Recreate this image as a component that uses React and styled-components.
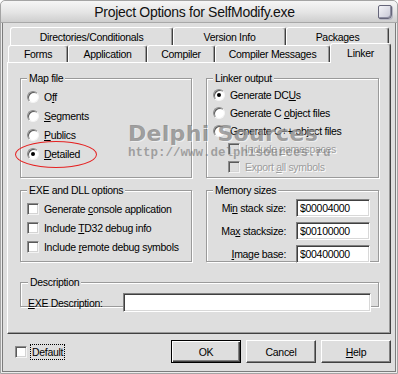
import React from "react"
import styled, { createGlobalStyle } from "styled-components"

const GlobalStyle = createGlobalStyle`
  body {
    margin: 0;
    background: #ffffff;
  }
`

const backTabs = [
  { label: "Directories/Conditionals", w: 163 },
  { label: "Version Info", w: 113 },
  { label: "Packages", w: 103 },
]

const frontTabs = [
  { label: "Forms", w: 60 },
  { label: "Application", w: 79 },
  { label: "Compiler", w: 68 },
  { label: "Compiler Messages", w: 115 },
  { label: "Linker", w: 61, active: true },
]

const ProjectOptions = () => {
  return (
    <Window>
      <TitleBar>
        <Title>Project Options for SelfModify.exe</Title>
        <CloseBox />
      </TitleBar>
      <Body>
        <TabRow $indent={3} $height={18}>
          {backTabs.map((t) => (
            <Tab key={t.label} $w={t.w}>
              {t.label}
            </Tab>
          ))}
        </TabRow>
        <TabRow $indent={1} $height={17}>
          {frontTabs.map((t) => (
            <Tab key={t.label} $w={t.w} $active={t.active}>
              {t.label}
            </Tab>
          ))}
        </TabRow>
        <Panel>
          <GroupBox $pt={2}>
            <Legend>Map file</Legend>
            <OptionRow $h={19}>
              <Radio />
              <span>O<u>f</u>f</span>
            </OptionRow>
            <OptionRow $h={19}>
              <Radio />
              <span><u>S</u>egments</span>
            </OptionRow>
            <OptionRow $h={19}>
              <Radio />
              <span><u>P</u>ublics</span>
            </OptionRow>
            <OptionRow $h={19}>
              <Radio $checked />
              <span><u>D</u>etailed</span>
            </OptionRow>
          </GroupBox>

          <GroupBox $pt={1}>
            <Legend>Linker output</Legend>
            <OptionRow $h={18}>
              <Radio $checked />
              <span>Generate DC<u>U</u>s</span>
            </OptionRow>
            <OptionRow $h={18}>
              <Radio />
              <span>Generate C <u>o</u>bject files</span>
            </OptionRow>
            <OptionRow $h={18}>
              <Radio />
              <span>Generate C++ object files</span>
            </OptionRow>
            <OptionRow $h={18} $indent={15} $disabled>
              <Check $disabled />
              <span>Include <u>n</u>amespaces</span>
            </OptionRow>
            <OptionRow $h={18} $indent={15} $disabled>
              <Check $disabled />
              <span>Export <u>a</u>ll symbols</span>
            </OptionRow>
          </GroupBox>

          <GroupBox $pt={2}>
            <Legend>EXE and DLL options</Legend>
            <OptionRow $h={19}>
              <Check />
              <span>Generate <u>c</u>onsole application</span>
            </OptionRow>
            <OptionRow $h={19}>
              <Check />
              <span>Include <u>T</u>D32 debug info</span>
            </OptionRow>
            <OptionRow $h={19}>
              <Check />
              <span>Include <u>r</u>emote debug symbols</span>
            </OptionRow>
          </GroupBox>

          <GroupBox $pt={2} $pr={8}>
            <Legend>Memory sizes</Legend>
            <SizeGrid>
              <SizeLabel>Mi<u>n</u> stack size:</SizeLabel>
              <Field $h={18} defaultValue="$00004000" readOnly />
              <SizeLabel>Ma<u>x</u> stacksize:</SizeLabel>
              <Field $h={18} defaultValue="$00100000" readOnly />
              <SizeLabel><u>I</u>mage base:</SizeLabel>
              <Field $h={18} defaultValue="$00400000" readOnly />
            </SizeGrid>
          </GroupBox>

          <GroupBox $pt={4} $pr={7} $wide>
            <Legend>Description</Legend>
            <DescRow>
              <DescLabel><u>E</u>XE Description:</DescLabel>
              <Field $h={19} $grow defaultValue="" readOnly />
            </DescRow>
          </GroupBox>
        </Panel>

        <Footer>
          <Check />
          <FocusLabel>Default</FocusLabel>
          <Buttons>
            <Button $default>OK</Button>
            <Button>Cancel</Button>
            <Button><u>H</u>elp</Button>
          </Buttons>
        </Footer>
      </Body>

      <Watermark>
        <MarkTitle>Delphi Sources</MarkTitle>
        <MarkUrl>http://www.delphisources.ru</MarkUrl>
      </Watermark>
      <Ellipse />
    </Window>
  )
}

const App = () => (
  <>
    <GlobalStyle />
    <ProjectOptions />
  </>
)

export default App

const Window = styled.div`
  position: relative;
  width: 398px;
  height: 374px;
  box-sizing: border-box;
  display: flex;
  flex-direction: column;
  background: #dedede;
  border: 1px solid #a4a4a4;
  border-radius: 5px 5px 0 0;
  box-shadow: inset 0 0 0 1px #ececec, inset 0 0 0 2px #7c7c7c;
  font-family: "Liberation Sans", Arial, sans-serif;
  font-size: 10.5px;
  letter-spacing: -0.3px;
  color: #000;
  overflow: hidden;

  u {
    text-decoration: underline;
    text-underline-offset: 1px;
  }
`

const TitleBar = styled.div`
  height: 22px;
  box-sizing: border-box;
  display: flex;
  align-items: center;
  padding: 0 5px 0 10px;
  background: linear-gradient(#f6f6f6, #e4e4e4 55%, #cecece);
  border-bottom: 1px solid #a8a8a8;
  border-radius: 4px 4px 0 0;
`

const Title = styled.div`
  flex: 1;
  text-align: center;
  font-size: 14px;
  letter-spacing: -0.3px;
  color: #111;
`

const CloseBox = styled.div`
  width: 14px;
  height: 14px;
  box-sizing: border-box;
  border: 1px solid #66667a;
  border-radius: 2px 2px 4px 2px;
  background: linear-gradient(135deg, #f4f4f8, #c6c6d4);
  box-shadow: inset -1px -1px 0 #8e8ea2, 1px 1px 0 #b8b8c4;
`

const Body = styled.div`
  flex: 1;
  display: flex;
  flex-direction: column;
  padding: 4px 6px 0 6px;
`

const TabRow = styled.div`
  display: flex;
  align-items: flex-end;
  height: ${(p) => p.$height}px;
  padding-left: ${(p) => p.$indent}px;
`

const Tab = styled.div`
  position: relative;
  z-index: ${(p) => (p.$active ? 2 : 0)};
  width: ${(p) => p.$w}px;
  height: ${(p) => (p.$active ? "calc(100% + 3px)" : "100%")};
  margin-top: ${(p) => (p.$active ? "-2px" : "0")};
  margin-bottom: ${(p) => (p.$active ? "-1px" : "0")};
  box-sizing: border-box;
  display: flex;
  align-items: center;
  justify-content: center;
  padding-bottom: ${(p) => (p.$active ? "2px" : "0")};
  background: #dedede;
  border-top: 1px solid #ffffff;
  border-left: 1px solid #ffffff;
  border-right: 1px solid #404040;
  border-radius: 3px 3px 0 0;
  box-shadow: inset -1px 0 0 #9a9a9a;
  white-space: nowrap;
`

const Panel = styled.div`
  position: relative;
  z-index: 1;
  height: 272px;
  box-sizing: border-box;
  display: grid;
  grid-template-columns: 172px 173px;
  grid-template-rows: 106px 84px 45px;
  column-gap: 14px;
  align-content: start;
  padding: 9px 11px 0 12px;
  border: 1px solid;
  border-color: #ffffff #404040 #404040 #ffffff;
  box-shadow: inset -1px -1px 0 #9a9a9a;

  & > fieldset:nth-child(3),
  & > fieldset:nth-child(4) {
    margin-top: 6px;
  }
  & > fieldset:nth-child(5) {
    margin-top: 14px;
  }
`

const GroupBox = styled.fieldset`
  grid-column: ${(p) => (p.$wide ? "1 / -1" : "auto")};
  margin: 0;
  min-width: 0;
  display: flex;
  flex-direction: column;
  padding: ${(p) => p.$pt}px ${(p) => p.$pr || 6}px 0 ${(p) => (p.$wide ? 7 : 6)}px;
  border: 1px solid #9a9a9a;
  box-shadow: 1px 1px 0 #ffffff, inset 1px 1px 0 #ffffff;
`

const Legend = styled.legend`
  padding: 0 2px;
  line-height: 13px;
  background: #dedede;
`

const OptionRow = styled.label`
  display: flex;
  align-items: center;
  gap: 5px;
  height: ${(p) => p.$h}px;
  padding-left: ${(p) => p.$indent || 0}px;
  color: ${(p) => (p.$disabled ? "#9c9c9c" : "#000")};
  text-shadow: ${(p) => (p.$disabled ? "1px 1px 0 #ffffff" : "none")};
  white-space: nowrap;
`

const Radio = styled.span`
  position: relative;
  flex-shrink: 0;
  width: 12px;
  height: 12px;
  box-sizing: border-box;
  border-radius: 50%;
  background: #ffffff;
  border: 1px solid;
  border-color: #8c8c8c #f4f4f4 #f4f4f4 #8c8c8c;
  box-shadow: inset 1px 1px 0 #5a5a5a;

  &::after {
    content: "";
    display: ${(p) => (p.$checked ? "block" : "none")};
    position: absolute;
    left: 3px;
    top: 3px;
    width: 4px;
    height: 4px;
    border-radius: 50%;
    background: #000;
  }
`

const Check = styled.span`
  flex-shrink: 0;
  width: 12px;
  height: 12px;
  box-sizing: border-box;
  background: ${(p) => (p.$disabled ? "#dedede" : "#ffffff")};
  border: 1px solid;
  border-color: #8c8c8c #f4f4f4 #f4f4f4 #8c8c8c;
  box-shadow: inset 1px 1px 0 #5a5a5a, inset -1px -1px 0 #d4d4d4;
`

const SizeGrid = styled.div`
  display: grid;
  grid-template-columns: 1fr 74px;
  column-gap: 10px;
  row-gap: 5px;
  align-items: center;
`

const SizeLabel = styled.span`
  text-align: right;
  white-space: nowrap;
`

const Field = styled.input`
  ${(p) => (p.$grow ? "flex: 1;" : "width: 74px;")}
  min-width: 0;
  height: ${(p) => p.$h}px;
  box-sizing: border-box;
  margin: 0;
  padding: 0 3px;
  font: inherit;
  letter-spacing: inherit;
  color: #000;
  background: #ffffff;
  border: 1px solid;
  border-color: #808080 #ffffff #ffffff #808080;
  box-shadow: inset 1px 1px 0 #404040, inset -1px -1px 0 #d8d8d8;
  outline: none;
`

const DescRow = styled.div`
  display: flex;
  align-items: center;
`

const DescLabel = styled.span`
  width: 95px;
  white-space: nowrap;
`

const Footer = styled.div`
  display: flex;
  align-items: center;
  padding: 6px 0 0 8px;
`

const FocusLabel = styled.span`
  margin-left: 3px;
  padding: 1px 1px;
  border: 1px dotted #000;
`

const Buttons = styled.div`
  margin-left: auto;
  display: flex;
  gap: 5px;
`

const Button = styled.button`
  width: 70px;
  height: 23px;
  padding: 0;
  font: inherit;
  letter-spacing: inherit;
  color: #000;
  background: #dedede;
  border: 1px solid;
  border-color: ${(p) => (p.$default ? "#000" : "#ffffff #404040 #404040 #ffffff")};
  box-shadow: ${(p) =>
    p.$default
      ? "inset 1px 1px 0 #ffffff, inset -1px -1px 0 #404040, inset -2px -2px 0 #808080"
      : "inset -1px -1px 0 #808080"};
`

const Watermark = styled.div`
  position: absolute;
  left: 127px;
  top: 122px;
  z-index: 5;
  display: flex;
  flex-direction: column;
  pointer-events: none;
`

const MarkTitle = styled.div`
  font-family: "DejaVu Sans", sans-serif;
  font-weight: bold;
  font-size: 22px;
  line-height: 22px;
  letter-spacing: 0.3px;
  color: rgba(105, 105, 105, 0.62);
  text-shadow: 1px 1px 0 rgba(255, 255, 255, 0.5);
`

const MarkUrl = styled.div`
  margin-top: 2px;
  font-family: "Liberation Mono", monospace;
  font-weight: bold;
  font-size: 12.5px;
  line-height: 13px;
  letter-spacing: 0;
  color: rgba(115, 115, 115, 0.6);
`

const Ellipse = styled.div`
  position: absolute;
  left: 14px;
  top: 140px;
  z-index: 5;
  width: 82px;
  height: 27px;
  box-sizing: border-box;
  border: 1px solid #e52222;
  border-radius: 50%;
`
